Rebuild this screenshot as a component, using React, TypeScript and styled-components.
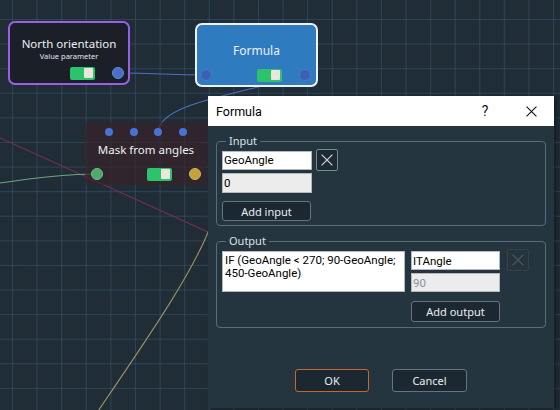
import React from "react";
import styled, { createGlobalStyle, css } from "styled-components";

const Global = createGlobalStyle`
  html, body { margin: 0; padding: 0; background: #202d37; }
  #root { width: 560px; height: 410px; }
  * { box-sizing: border-box; }
`;

const Canvas = styled.div`
  position: relative;
  width: 560px;
  height: 410px;
  overflow: hidden;
  background-color: #202d37;
  background-image:
    linear-gradient(to right, rgba(62, 100, 130, 0.42) 1px, transparent 1px),
    linear-gradient(to bottom, rgba(62, 100, 130, 0.42) 1px, transparent 1px);
  background-size: 24.6px 24.6px;
  background-position: 12px 19px;
  font-family: "Noto Sans", "Open Sans", sans-serif;
`;

const Wires = styled.svg`
  position: absolute;
  left: 0;
  top: 0;
  width: 560px;
  height: 410px;
`;

type Variant = "param" | "formula" | "mask";

const variantStyles = {
  param: css`
    border: 2px solid #9b5fe3;
    background: #1a1f28;
    border-radius: 7px;
    padding-top: 13px;
  `,
  formula: css`
    border: 2px solid #eef2f6;
    background: #2f7bc0;
    border-radius: 7px;
    padding-top: 18px;
  `,
  mask: css`
    border: none;
    background: rgba(56, 33, 40, 0.66);
    border-radius: 4px;
    padding-top: 6px;
  `,
};

const Node = styled.div<{ $x: number; $y: number; $w: number; $h: number; $variant: Variant }>`
  position: absolute;
  left: ${(p) => p.$x}px;
  top: ${(p) => p.$y}px;
  width: ${(p) => p.$w}px;
  height: ${(p) => p.$h}px;
  display: flex;
  flex-direction: column;
  align-items: stretch;
  ${(p) => variantStyles[p.$variant]}
`;

const NodeTitle = styled.div<{ $size: number }>`
  color: #eef1f4;
  font-size: ${(p) => p.$size}px;
  line-height: 16px;
  text-align: center;
  white-space: nowrap;
`;

const NodeSubtitle = styled.div`
  color: #e4e7ea;
  font-size: 7.5px;
  line-height: 9px;
  text-align: center;
`;

const TopPorts = styled.div`
  display: flex;
  justify-content: center;
  gap: 16.6px;
  margin-bottom: 6px;
`;

const Dot = styled.span`
  width: 8px;
  height: 8px;
  border-radius: 50%;
  background: #4a72d2;
`;

const NodeFooter = styled.div<{ $pl: number; $pr: number; $pb: number }>`
  margin-top: auto;
  display: flex;
  align-items: center;
  gap: 17px;
  padding: 0 ${(p) => p.$pr}px ${(p) => p.$pb}px ${(p) => p.$pl}px;
  height: ${(p) => 13 + p.$pb}px;
`;

const Spacer = styled.span`
  flex: 1;
`;

const Port = styled.span<{ $fill: string; $ring: string }>`
  width: 12px;
  height: 12px;
  border-radius: 50%;
  background: ${(p) => p.$fill};
  border: 1px solid ${(p) => p.$ring};
  flex: none;
`;

const Toggle = styled.span`
  width: 25px;
  height: 13px;
  border-radius: 2px;
  background: #2bc46a;
  display: flex;
  align-items: center;
  justify-content: flex-end;
  padding: 0 2px;
  flex: none;
`;

const Knob = styled.span`
  width: 9px;
  height: 10px;
  background: #ece5de;
  border-radius: 1px;
`;

/* Dialog */

const Dialog = styled.div`
  position: absolute;
  left: 208px;
  top: 96px;
  width: 346px;
  height: 312px;
  background: #243540;
  box-shadow: 3px 1px 4px rgba(0, 0, 0, 0.35);
  display: flex;
  flex-direction: column;
  font-family: "Noto Sans", "Open Sans", sans-serif;
`;

const TitleBar = styled.div`
  height: 30px;
  background: #ffffff;
  display: flex;
  align-items: center;
  padding-left: 8px;
  font-family: Roboto, "Liberation Sans", sans-serif;
`;

const TitleText = styled.div`
  flex: 1;
  color: #000;
  font-size: 12.5px;
`;

const CaptionButton = styled.div`
  width: 46px;
  height: 30px;
  display: flex;
  align-items: center;
  justify-content: center;
  color: #111;
  font-size: 14px;
`;

const Body = styled.div`
  flex: 1;
  display: flex;
  flex-direction: column;
  padding: 15px 8px 0 8px;
`;

const Group = styled.div<{ $h: number }>`
  position: relative;
  height: ${(p) => p.$h}px;
  border: 1px solid #5c6c77;
  border-radius: 4px;
  padding: 7px 5px 0 5px;
  & + & {
    margin-top: 15px;
  }
`;

const Legend = styled.span`
  position: absolute;
  top: -8px;
  left: 9px;
  padding: 0 3px;
  background: #243540;
  color: #dde2e6;
  font-size: 11px;
  line-height: 14px;
`;

const Column = styled.div<{ $gap?: number; $mt?: number }>`
  display: flex;
  flex-direction: column;
  gap: ${(p) => p.$gap ?? 0}px;
  margin-top: ${(p) => p.$mt ?? 0}px;
`;

const Row = styled.div<{ $gap: number; $align?: string }>`
  display: flex;
  align-items: ${(p) => p.$align ?? "center"};
  gap: ${(p) => p.$gap}px;
`;

const Field = styled.input<{ $w: number; $h: number; $muted?: boolean }>`
  width: ${(p) => p.$w}px;
  height: ${(p) => p.$h}px;
  border: 1px solid #b4b8bc;
  background: ${(p) => (p.$muted ? "#ececec" : "#ffffff")};
  color: #000;
  font-family: Roboto, "Liberation Sans", sans-serif;
  font-size: 11.5px;
  padding: 0 1px;
  margin: 0;
  outline: none;
  &:disabled {
    color: #8a939a;
    background: #ececec;
  }
`;

const FormulaArea = styled.textarea`
  width: 183px;
  height: 41px;
  margin: 2px 0 0 0;
  border: 1px solid #b4b8bc;
  background: #fff;
  color: #000;
  font-family: Roboto, "Liberation Sans", sans-serif;
  font-size: 11.5px;
  line-height: 13px;
  padding: 2px 2px;
  resize: none;
  overflow: hidden;
  outline: none;
`;

const IconButton = styled.div<{ $disabled?: boolean }>`
  width: 22px;
  height: 22px;
  border-radius: 2px;
  border: 1px solid ${(p) => (p.$disabled ? "#33424c" : "#7b8892")};
  background: ${(p) => (p.$disabled ? "#26343e" : "#1d2a33")};
  display: flex;
  align-items: center;
  justify-content: center;
  flex: none;
`;

const DarkButton = styled.div<{ $w: number; $h: number; $accent?: boolean }>`
  width: ${(p) => p.$w}px;
  height: ${(p) => p.$h}px;
  border-radius: 3px;
  border: 1px solid ${(p) => (p.$accent ? "#c9652e" : "#66747e")};
  background: #1c2831;
  color: #e9edf0;
  font-size: 11px;
  display: flex;
  align-items: center;
  justify-content: center;
  flex: none;
`;

const ButtonRow = styled.div`
  margin-top: 41px;
  display: flex;
  justify-content: center;
  gap: 23px;
`;

const Cross = ({ color, size }: { color: string; size: number }) => (
  <svg width={size} height={size} viewBox="0 0 10 10">
    <path d="M0.5 0.5 L9.5 9.5 M9.5 0.5 L0.5 9.5" stroke={color} strokeWidth={1} fill="none" />
  </svg>
);

export default function App() {
  return (
    <>
      <Global />
      <Canvas>
        <Wires viewBox="0 0 560 410">
          <path d="M0 138 L208 232" stroke="#7a2c58" strokeWidth="1.1" fill="none" />
          <path d="M0 183 C40 177 70 174 97 174" stroke="#6fa87c" strokeWidth="1.1" fill="none" />
          <path d="M212 222 C196 268 150 335 96 414" stroke="#9a9262" strokeWidth="1.1" fill="none" />
          <path d="M118 73 C160 73 165 75 206 75" stroke="#4d6fbf" strokeWidth="1.1" fill="none" />
          <path d="M158 132 C160 104 230 96 305 75" stroke="#4d6fbf" strokeWidth="1.1" fill="none" />
        </Wires>

        <Node $x={8} $y={21} $w={122} $h={64} $variant="param">
          <NodeTitle $size={11.5}>North orientation</NodeTitle>
          <NodeSubtitle>Value parameter</NodeSubtitle>
          <NodeFooter $pl={4} $pr={4} $pb={3.5}>
            <Spacer />
            <Toggle>
              <Knob />
            </Toggle>
            <Port $fill="#4a6fc8" $ring="#6a8ad6" />
          </NodeFooter>
        </Node>

        <Node $x={195} $y={23} $w={123} $h={64} $variant="formula">
          <NodeTitle $size={12}>Formula</NodeTitle>
          <NodeFooter $pl={3} $pr={5} $pb={3.5}>
            <Port $fill="#3a61b6" $ring="#4f78c8" />
            <Spacer />
            <Toggle>
              <Knob />
            </Toggle>
            <Port $fill="#3a61b6" $ring="#4f78c8" />
          </NodeFooter>
        </Node>

        <Node $x={85} $y={122} $w={122} $h={63} $variant="mask">
          <TopPorts>
            <Dot />
            <Dot />
            <Dot />
            <Dot />
          </TopPorts>
          <NodeTitle $size={11.5}>Mask from angles</NodeTitle>
          <NodeFooter $pl={6} $pr={6} $pb={4.5}>
            <Port $fill="#4fa96c" $ring="#6fc08a" />
            <Spacer />
            <Toggle>
              <Knob />
            </Toggle>
            <Port $fill="#c2a23c" $ring="#d3b656" />
          </NodeFooter>
        </Node>

        <Dialog>
          <TitleBar>
            <TitleText>Formula</TitleText>
            <CaptionButton>?</CaptionButton>
            <CaptionButton>
              <Cross color="#111" size={11} />
            </CaptionButton>
          </TitleBar>
          <Body>
            <Group $h={85}>
              <Legend>Input</Legend>
              <Row $gap={4}>
                <Field $w={90} $h={19} defaultValue="GeoAngle" />
                <IconButton>
                  <Cross color="#cfd6db" size={12} />
                </IconButton>
              </Row>
              <Column $mt={2}>
                <Field $w={90} $h={20} $muted defaultValue="0" readOnly />
              </Column>
              <Column $mt={8}>
                <DarkButton $w={89} $h={20}>Add input</DarkButton>
              </Column>
            </Group>
            <Group $h={87}>
              <Legend>Output</Legend>
              <Row $gap={6} $align="flex-start">
                <FormulaArea defaultValue={"IF (GeoAngle < 270; 90-GeoAngle;\n450-GeoAngle)"} />
                <Column $gap={3} $mt={2}>
                  <Field $w={89} $h={19} defaultValue="ITAngle" />
                  <Field $w={89} $h={19} defaultValue="90" disabled />
                  <Column $mt={6}>
                    <DarkButton $w={89} $h={21}>Add output</DarkButton>
                  </Column>
                </Column>
                <IconButton $disabled style={{ marginLeft: 1 }}>
                  <Cross color="#4d5b66" size={12} />
                </IconButton>
              </Row>
            </Group>
            <ButtonRow>
              <DarkButton $w={74} $h={23} $accent>
                OK
              </DarkButton>
              <DarkButton $w={75} $h={23}>Cancel</DarkButton>
            </ButtonRow>
          </Body>
        </Dialog>
      </Canvas>
    </>
  );
}
